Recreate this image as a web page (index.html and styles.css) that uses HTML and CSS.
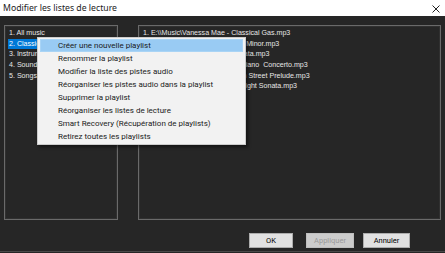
FILE: index.html
```html
<!DOCTYPE html>
<html lang="fr">
<head>
    <meta charset="UTF-8">
    <title>Modifier les listes de lecture</title>
    <link rel="stylesheet" href="styles.css">
</head>
<body>
    <div class="titlebar">
        <span class="title">Modifier les listes de lecture</span>
        <svg class="close" width="8" height="8" viewBox="0 0 8 8">
            <path d="M0.5 0.5 L7.5 7.5 M7.5 0.5 L0.5 7.5" stroke="#222" stroke-width="1"/>
        </svg>
    </div>

    <div class="window">
        <div class="panes">
            <div class="listbox playlists">
                <div class="row">1. All music</div>
                <div class="row selected">2. Classical</div>
                <div class="row">3. Instrumental</div>
                <div class="row">4. Soundtracks</div>
                <div class="row">5. Songs</div>
            </div>
            <div class="listbox tracks">
                <div class="row">1. E:\\Music\Vanessa Mae - Classical Gas.mp3</div>
                <div class="row">2. E:\\Music\Vanessa Mae - in G Minor.mp3</div>
                <div class="row">3. E:\\Music\Vanessa Mae - Sonata.mp3</div>
                <div class="row">4. E:\\Music\Vanessa Mae - Le Piano&nbsp; Concerto.mp3</div>
                <div class="row">5. E:\\Music\Vanessa Mae - Main Street Prelude.mp3</div>
                <div class="row">6. E:\\Music\Vanessa Mae - Daylight Sonata.mp3</div>
            </div>
        </div>

        <div class="buttons">
            <button class="btn btn-ok">OK</button>
            <button class="btn btn-apply" disabled>Appliquer</button>
            <button class="btn btn-cancel">Annuler</button>
        </div>

        <!-- menu contextuel sur la liste de gauche -->
        <div class="menu">
            <div class="item active">Créer une nouvelle playlist</div>
            <div class="item">Renommer la playlist</div>
            <div class="item">Modifier la liste des pistes audio</div>
            <div class="item">Réorganiser les pistes audio dans la playlist</div>
            <div class="item">Supprimer la playlist</div>
            <div class="item">Réorganiser les listes de lecture</div>
            <div class="item">Smart Recovery (Récupération de playlists)</div>
            <div class="item">Retirez toutes les playlists</div>
        </div>
    </div>
</body>
</html>
```

FILE: styles.css
```css
body {
    margin: 0;
    width: 445px;
    height: 253px;
    overflow: hidden;
    font-family: Roboto, "Noto Sans", sans-serif;
    font-size: 8px;
    background: #262626;
}
.titlebar {
    height: 16px;
    background: #fff;
    display: flex;
    align-items: center;
    justify-content: space-between;
    padding: 0 5px 0 3px;
    color: #222;
    font-family: "Noto Sans", sans-serif;
    font-size: 8.7px;
}
.close {
    margin-top: 1px;
}
.window {
    position: relative;
    height: 236px;
    box-sizing: border-box;
    border-bottom: 1px solid #4a4a4a;
    padding: 9px 0 0 4px;
}
.panes {
    display: grid;
    grid-template-columns: 114px 303px;
    gap: 20px;
    height: 195px;
}
.listbox {
    border: 1px solid #6a6a6a;
    box-shadow: inset 0 0 0 1px #303030;
    background: #262626;
    padding: 2px 3px;
    color: #e6e6e6;
    font-family: "Liberation Sans", Arial, sans-serif;
    font-size: 7.1px;
    overflow: hidden;
    white-space: nowrap;
}
.row {
    height: 10.7px;
    line-height: 10.7px;
    padding-left: 1px;
}
.row.selected {
    background: #0078d7;
    color: #fff;
}
.buttons {
    display: flex;
    padding: 13px 0 0 245px;
}
.btn {
    height: 15px;
    padding: 0;
    border: 1px solid #adadad;
    background: #e1e1e1;
    color: #000;
    font-family: inherit;
    font-size: 7.5px;
}
.btn-ok {
    width: 44px;
}
.btn-apply {
    width: 48px;
    margin-left: 13px;
    background: #cccccc;
    border-color: #bfbfbf;
    color: #9a9a9a;
}
.btn-cancel {
    width: 47px;
    margin-left: 9px;
}
.menu {
    position: absolute;
    left: 37px;
    top: 21px;
    width: 203px;
    padding: 1px 2px;
    background: #f2f2f2;
    border: 1px solid #ccc;
    box-shadow: 2px 2px 3px rgba(0, 0, 0, 0.5);
    color: #1a1a1a;
}
.item {
    height: 13px;
    line-height: 13px;
    padding-left: 18px;
    white-space: nowrap;
}
.item.active {
    background: #99cbf3;
    box-shadow: inset 0 0 0 1px #a9d4f5;
}
```
